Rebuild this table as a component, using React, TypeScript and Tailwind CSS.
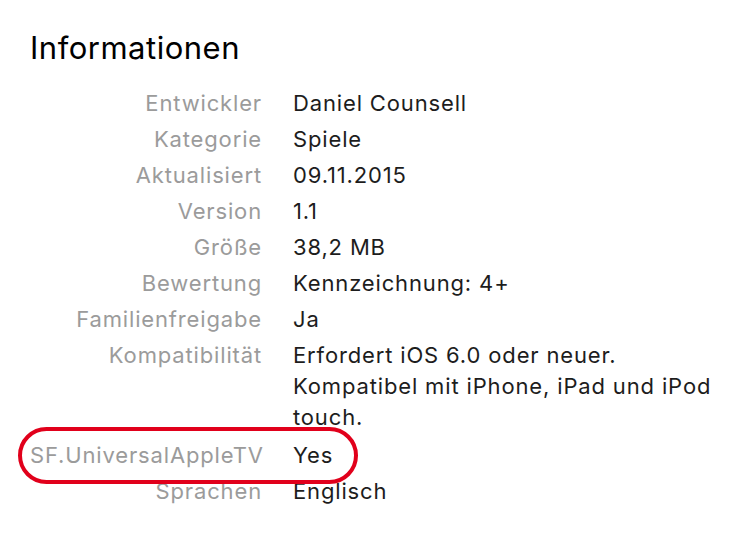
import React from 'react';

interface InfoRow {
  label: string;
  value: string[];
  highlight?: boolean;
}

const rows: InfoRow[] = [
  { label: 'Entwickler', value: ['Daniel Counsell'] },
  { label: 'Kategorie', value: ['Spiele'] },
  { label: 'Aktualisiert', value: ['09.11.2015'] },
  { label: 'Version', value: ['1.1'] },
  { label: 'Größe', value: ['38,2 MB'] },
  { label: 'Bewertung', value: ['Kennzeichnung: 4+'] },
  { label: 'Familienfreigabe', value: ['Ja'] },
  {
    label: 'Kompatibilität',
    value: ['Erfordert iOS 6.0 oder neuer.', 'Kompatibel mit iPhone, iPad und iPod', 'touch.'],
  },
  { label: 'SF.UniversalAppleTV', value: ['Yes'], highlight: true },
  { label: 'Sprachen', value: ['Englisch'] },
];

function App() {
  return (
    <div className="h-[536px] w-[747px] overflow-hidden bg-white pl-[30px] pt-[28px] font-['Inter',sans-serif] antialiased">
      <h2 className="text-[31px] leading-[40px] tracking-[0.5px] text-black">Informationen</h2>

      {/* Info rows */}
      <div className="mt-[20px] flex flex-col gap-[5px]">
        {rows.map((row) => (
          <div
            key={row.label}
            className={`relative flex text-[22px] leading-[31px] tracking-[0.85px] ${row.highlight ? 'mt-[2px]' : ''}`}
          >
            {row.highlight && (
              <span className="absolute left-[-12px] top-[-13px] z-[5] h-[57px] w-[340px] rounded-full border-[4px] border-[#e1001b] bg-white" />
            )}
            <div
              className={`w-[232px] shrink-0 text-right text-[#9b9b9b] ${row.highlight ? 'relative z-10' : ''}`}
            >
              {row.label}
            </div>
            <div
              className={`ml-[31px] w-[440px] text-[#1d1d1d] ${row.highlight ? 'relative z-10' : ''}`}
            >
              {row.value.map((line) => (
                <div key={line} className="whitespace-nowrap">
                  {line}
                </div>
              ))}
            </div>
          </div>
        ))}
      </div>
    </div>
  );
}

export default App;
